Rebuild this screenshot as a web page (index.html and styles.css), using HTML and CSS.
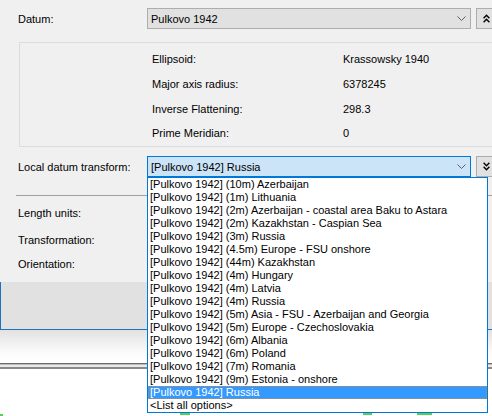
FILE: index.html
```html
<!DOCTYPE html>
<html>
<head>
  <title>Coordinate System</title>
  <link rel="stylesheet" href="styles.css">
</head>
<body>
  <div class="window">
    <div class="dialog">
      <div class="field_row datum_row">
        <label class="field_label">Datum:</label>
        <div class="combo">
          <span>Pulkovo 1942</span>
          <svg class="chevron" width="9" height="5" viewBox="0 0 9 5"><polyline points="0.5,0.5 4.5,4.5 8.5,0.5" fill="none" stroke="#5f5f5f"/></svg>
        </div>
        <div class="side_btn">
          <svg width="7" height="9" viewBox="0 0 7 9"><path d="M0.6 4.2 L3.5 1.2 L6.4 4.2 M0.6 8.2 L3.5 5.2 L6.4 8.2" fill="none" stroke="#000" stroke-width="1.4"/></svg>
        </div>
      </div>

      <div class="datum_info">
        <div>Ellipsoid:</div><div>Krassowsky 1940</div>
        <div>Major axis radius:</div><div>6378245</div>
        <div>Inverse Flattening:</div><div>298.3</div>
        <div>Prime Meridian:</div><div>0</div>
      </div>

      <div class="field_row transform_row">
        <label class="field_label">Local datum transform:</label>
        <div class="combo focused">
          <span>[Pulkovo 1942] Russia</span>
          <svg class="chevron" width="9" height="5" viewBox="0 0 9 5"><polyline points="0.5,0.5 4.5,4.5 8.5,0.5" fill="none" stroke="#5f5f5f"/></svg>
        </div>
        <div class="side_btn">
          <svg width="7" height="9" viewBox="0 0 7 9"><path d="M0.6 0.8 L3.5 3.8 L6.4 0.8 M0.6 4.8 L3.5 7.8 L6.4 4.8" fill="none" stroke="#000" stroke-width="1.4"/></svg>
        </div>
      </div>

      <div class="divider"></div>

      <div class="plain_label length_label">Length units:</div>
      <div class="plain_label transformation_label">Transformation:</div>
      <div class="plain_label orientation_label">Orientation:</div>
    </div>

    <div class="footer"></div>

    <div class="below">
      <div class="shadow"></div>
      <div class="splitter"></div>
      <div class="spacer"></div>
      <svg class="ticks" width="492" height="3" viewBox="0 0 492 3">
        <path d="M0 2 H3 M180 1 H190 M363 1 H372 M417 1 H432" stroke="#22c022" stroke-width="1.5"/>
      </svg>
    </div>

    <ul class="dropdown">
      <li>[Pulkovo 1942] (10m) Azerbaijan</li>
      <li>[Pulkovo 1942] (1m) Lithuania</li>
      <li>[Pulkovo 1942] (2m) Azerbaijan - coastal area Baku to Astara</li>
      <li>[Pulkovo 1942] (2m) Kazakhstan - Caspian Sea</li>
      <li>[Pulkovo 1942] (3m) Russia</li>
      <li>[Pulkovo 1942] (4.5m) Europe - FSU onshore</li>
      <li>[Pulkovo 1942] (44m) Kazakhstan</li>
      <li>[Pulkovo 1942] (4m) Hungary</li>
      <li>[Pulkovo 1942] (4m) Latvia</li>
      <li>[Pulkovo 1942] (4m) Russia</li>
      <li>[Pulkovo 1942] (5m) Asia - FSU - Azerbaijan and Georgia</li>
      <li>[Pulkovo 1942] (5m) Europe - Czechoslovakia</li>
      <li>[Pulkovo 1942] (6m) Albania</li>
      <li>[Pulkovo 1942] (6m) Poland</li>
      <li>[Pulkovo 1942] (7m) Romania</li>
      <li>[Pulkovo 1942] (9m) Estonia - onshore</li>
      <li class="selected">[Pulkovo 1942] Russia</li>
      <li>&lt;List all options&gt;</li>
    </ul>
  </div>
</body>
</html>
```

FILE: styles.css
```css
* {
  box-sizing: border-box;
}

html, body {
  margin: 0;
  padding: 0;
  overflow: hidden;
  background: #fff;
}

body {
  font-family: "Liberation Sans", Arial, sans-serif;
  font-size: 11px;
  color: #000;
}

.window {
  position: relative;
  width: 492px;
  height: 416px;
  overflow: hidden;
}

.dialog {
  height: 282px;
  padding-top: 8px;
  background-color: #f0f0f0;
  overflow: hidden;
}

.field_row {
  display: flex;
  align-items: center;
  height: 21px;
}

.transform_row {
  margin-top: 9px;
}

.field_label {
  flex: 0 0 147px;
  padding-left: 18px;
}

.combo {
  flex: 0 0 324px;
  height: 21px;
  display: flex;
  align-items: center;
  padding: 0 4px 0 3px;
  background-color: #e1e1e1;
  border: 1px solid #adadad;
}

.combo.focused {
  background-color: #cce4f7;
  border-color: #0078d7;
}

.combo .chevron {
  margin-left: auto;
}

.side_btn {
  flex: 0 0 21px;
  height: 21px;
  margin-left: 5px;
  display: flex;
  align-items: center;
  padding-left: 6px;
  background-color: #e1e1e1;
  border: 1px solid #adadad;
}

.datum_info {
  display: grid;
  grid-template-columns: 191px auto;
  line-height: 24px;
  height: 105px;
  margin: 13px -10px 0 19px;
  padding: 4px 0 0 132px;
  border: 1px solid #dcdcdc;
}

.divider {
  height: 1px;
  margin: 18px 0 0 16px;
  background-color: #a0a0a0;
}

.plain_label {
  line-height: 16px;
  padding-left: 18px;
}

.length_label { margin-top: 9px; }
.transformation_label { margin-top: 11px; }
.orientation_label { margin-top: 8px; }

.footer {
  height: 48px;
  background-color: #e1e1e1;
  border-bottom: 1px solid #1f72bd;
  border-left: 1px solid #1f72bd;
}

.below {
  height: 86px;
}

.shadow {
  height: 33px;
  background: linear-gradient(#e2e2e2, #fbfbfb 70%, #fff);
}

.splitter {
  height: 6px;
  background: linear-gradient(#6a6a6a 0 1px, #bdbdbd 1px 2px, #e8e8e8 2px 4px, #8a8a8a 4px 6px);
}

.spacer {
  height: 44px;
}

.ticks {
  display: block;
}

.dropdown {
  position: absolute;
  top: 177px;
  left: 147px;
  width: 341px;
  height: 236px;
  margin: 0;
  padding: 0;
  list-style: none;
  background-color: #fff;
  border: 1px solid #0078d7;
}

.dropdown li {
  height: 13px;
  line-height: 13px;
  padding-left: 2px;
  white-space: nowrap;
  overflow: hidden;
}

.dropdown li.selected {
  background-color: #3399ff;
  color: #fff;
  outline: 1px dotted #d08a3c;
  outline-offset: -1px;
}
```
